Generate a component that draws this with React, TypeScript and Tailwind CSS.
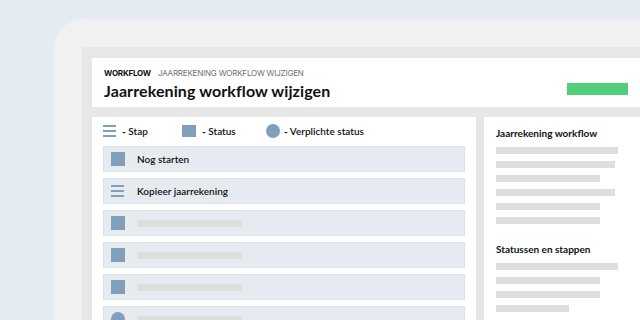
import React from "react";

const font = { fontFamily: "Lato, 'Noto Sans', sans-serif" };
const inter = { fontFamily: "Inter, 'Noto Sans', sans-serif" };

function StapIcon() {
  return (
    <div className="flex flex-col gap-[3px] w-[13px]">
      <div className="h-[2px] bg-[#7f9fbb]" />
      <div className="h-[2px] bg-[#7f9fbb]" />
      <div className="h-[2px] bg-[#7f9fbb]" />
    </div>
  );
}

function Icon({ kind }: { kind: "stap" | "status" | "verplicht" }) {
  if (kind === "stap")
    return (
      <div className="w-[14px] h-[14px] flex items-center">
        <StapIcon />
      </div>
    );
  if (kind === "status") return <div className="w-[14px] h-[14px] bg-[#7f9fbb]" />;
  return <div className="w-[14px] h-[14px] rounded-full bg-[#7f9fbb]" />;
}

const rows: { kind: "stap" | "status" | "verplicht"; label?: string }[] = [
  { kind: "status", label: "Nog starten" },
  { kind: "stap", label: "Kopieer jaarrekening" },
  { kind: "status" },
  { kind: "status" },
  { kind: "status" },
  { kind: "verplicht" },
];

export default function App() {
  return (
    <div
      className="w-[640px] h-[320px] overflow-hidden bg-[#e5ebf2] pt-[19px] pl-[54px]"
      style={font}
    >
      <div className="h-[340px] bg-[#f1f1f1] rounded-tl-[30px] pt-[28px] pl-[28px]">
        <div className="h-full bg-[#e7e7e7] pt-[11px] pl-[10px] flex flex-col">
          <div className="h-[49px] bg-white flex justify-between items-start pl-[12px] pr-[12px] pt-[10px]">
            <div className="flex flex-col">
              <div
                className="flex items-center gap-[7px] text-[8px] leading-[10px] tracking-[-0.2px]"
                style={inter}
              >
                <span className="font-bold text-[#111]">WORKFLOW</span>
                <span className="text-[#6f6f6f]">JAARREKENING WORKFLOW WIJZIGEN</span>
              </div>
              <div className="mt-[2px] text-[16px] leading-[22px] font-bold text-[#111] tracking-[0.1px]">
                Jaarrekening workflow wijzigen
              </div>
            </div>
            <div className="mt-[15px] w-[61px] h-[12px] bg-[#52cd7b]" />
          </div>
          <div className="flex mt-[10px] gap-[8px] flex-1">
            <div className="w-[384px] bg-white pt-[8px] px-[11px]">
              <div className="flex items-center h-[12px] text-[10px] font-semibold text-[#111]">
                <div className="flex items-center gap-[6px] w-[79px]">
                  <StapIcon />
                  <span>
                    <span className="font-black">-</span> Stap
                  </span>
                </div>
                <div className="flex items-center gap-[6px] w-[84px]">
                  <div className="w-[14px] h-[12px] bg-[#7f9fbb]" />
                  <span>
                    <span className="font-black">-</span> Status
                  </span>
                </div>
                <div className="flex items-center gap-[4px]">
                  <div className="w-[14px] h-[14px] rounded-full bg-[#7f9fbb]" />
                  <span>
                    <span className="font-black">-</span> Verplichte status
                  </span>
                </div>
              </div>
              <div className="mt-[9px] flex flex-col gap-[6px]">
                {rows.map((r, i) => (
                  <div
                    key={i}
                    className="h-[26px] bg-[#e6ebf2] border border-[#dde3ea] flex items-center pl-[7px] gap-[12px]"
                  >
                    <Icon kind={r.kind} />
                    {r.label ? (
                      <span className="text-[10px] font-semibold text-[#111]">{r.label}</span>
                    ) : (
                      <div className="w-[105px] h-[7px] bg-[#dedede]" />
                    )}
                  </div>
                ))}
              </div>
            </div>
            <div className="flex-1 bg-white pt-[10px] pl-[12px]">
              <div className="text-[10px] leading-[12px] font-bold text-[#111]">
                Jaarrekening workflow
              </div>
              <div className="mt-[8px] flex flex-col gap-[7px]">
                {[122, 119, 104, 119, 104, 104].map((w, i) => (
                  <div key={i} className="h-[7px] bg-[#dedede]" style={{ width: w }} />
                ))}
              </div>
              <div className="mt-[19px] text-[10px] leading-[12px] font-bold text-[#111]">
                Statussen en stappen
              </div>
              <div className="mt-[8px] flex flex-col gap-[7px]">
                {[122, 104, 104, 73].map((w, i) => (
                  <div key={i} className="h-[7px] bg-[#dedede]" style={{ width: w }} />
                ))}
              </div>
            </div>
          </div>
        </div>
      </div>
    </div>
  );
}
